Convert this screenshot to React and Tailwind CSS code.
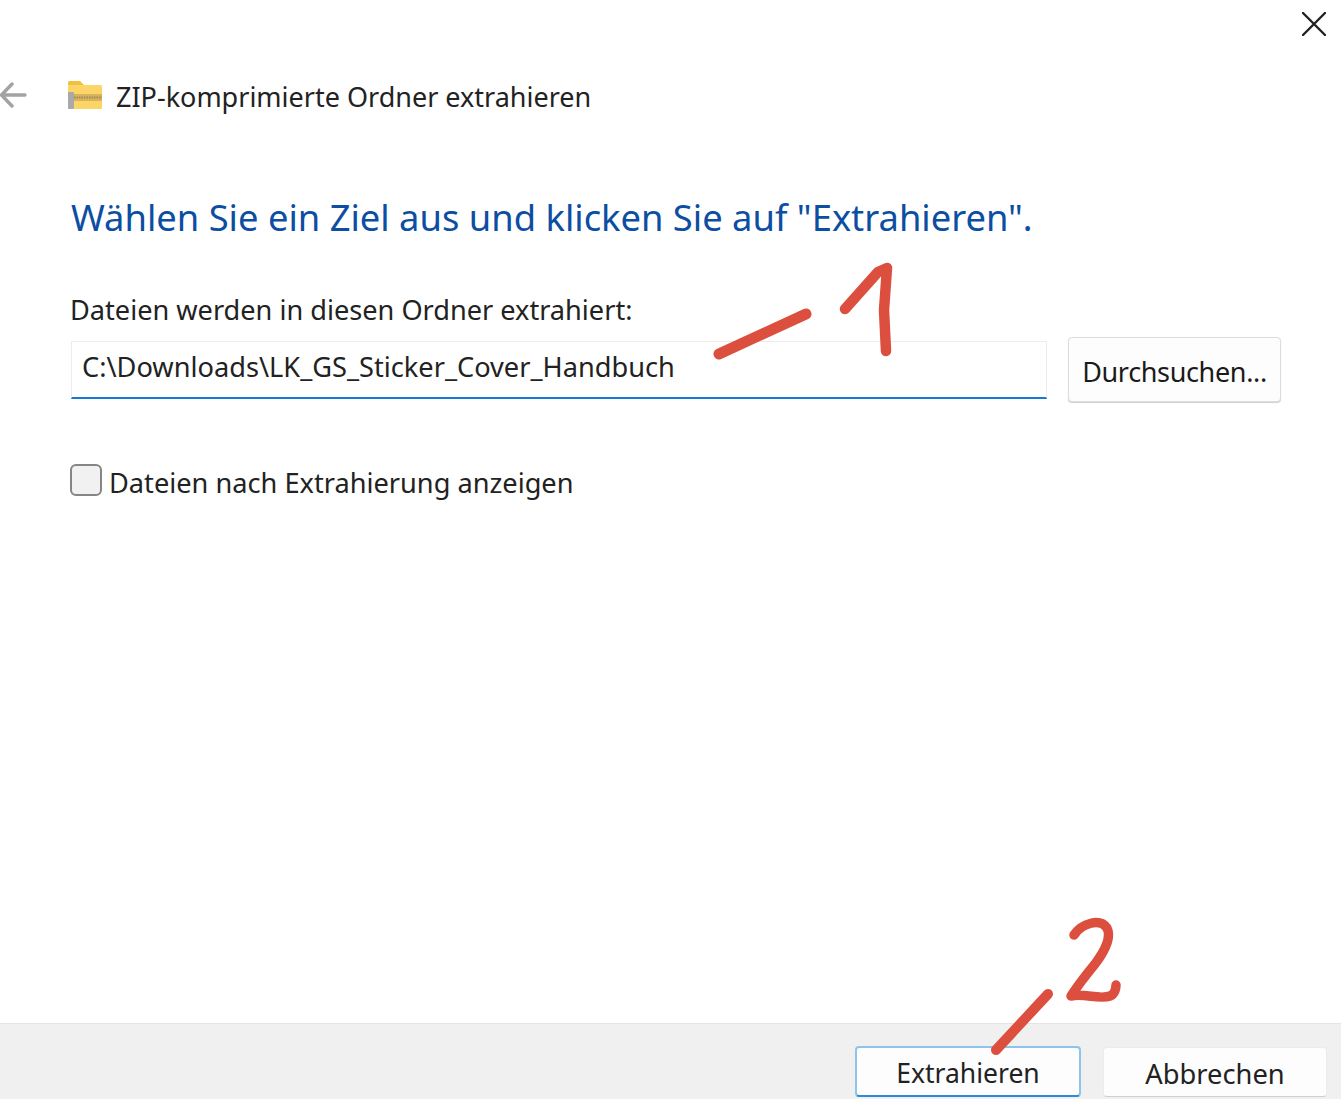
import React from 'react';

const font = 'font-["Noto_Sans",sans-serif]';

const Annotations = () => (
  <svg className="absolute left-0 top-0 pointer-events-none" width="1341" height="1099" viewBox="0 0 1341 1099" fill="none" stroke="#dc4f3e" strokeLinecap="round" strokeLinejoin="round">
    <path d="M719 354L806 314" strokeWidth="11" />
    <path d="M845 309L878 272L887 268L884 310L886 351" strokeWidth="10.5" />
    <path d="M996 1050L1048 994" strokeWidth="10" />
    <path d="M1074 935C1082 923 1100 918 1107 928C1112 938 1104 952 1095 964C1086 975 1078 985 1071 996C1084 993 1100 1000 1110 996C1115 994 1116 988 1116 985" strokeWidth="9.5" />
  </svg>
);

const FolderIcon = () => (
  <svg width="36" height="30" viewBox="0 0 36 30" className="shrink-0">
    <path d="M1 3C1 1.5 2 1 3 1H13L17 5H1Z" fill="#f5bf3c" />
    <rect x="1" y="5" width="34" height="24" rx="1.5" fill="#fbd568" />
    <rect x="1" y="14" width="34" height="7" fill="#d8b35a" />
    <path d="M7 17.5H35" stroke="#9c8a5e" strokeWidth="2" strokeDasharray="1.5 1" />
    <rect x="1" y="12" width="6" height="17" rx="1" fill="#a9a9a9" />
  </svg>
);

export default function App() {
  return (
    <div className={`relative flex h-[1099px] w-[1341px] flex-col overflow-hidden bg-white text-[#1a1a1a] ${font}`}>
      <div className="flex h-[80px] justify-end pr-[15px] pt-[12px]">
        <svg width="24" height="24" viewBox="0 0 24 24" stroke="#222" strokeWidth="2.4" strokeLinecap="round">
          <path d="M1 1L23 23M23 1L1 23" />
        </svg>
      </div>

      <div className="flex h-[30px] items-center">
        <svg width="28" height="28" viewBox="0 0 28 28" fill="none" stroke="#a3a3a3" strokeWidth="3.4" strokeLinecap="round" strokeLinejoin="round" className="-translate-y-[1px]">
          <path d="M25 15H2M12 4L1.5 15L12 26" />
        </svg>
        <div className="ml-[39px]"><FolderIcon /></div>
        <span className="ml-[13px] pt-[4px] text-[27px] leading-[30px] text-[#222]">ZIP-komprimierte Ordner extrahieren</span>
      </div>

      <div className="flex flex-1 flex-col pl-[71px] pr-[60px]">
        <h1 className="mt-[82px] whitespace-nowrap text-[36.35px] leading-[50px] font-normal text-[#0b4ea2]">
          Wählen Sie ein Ziel aus und klicken Sie auf "Extrahieren".
        </h1>
        <div className="-ml-px mt-[50px] text-[27.15px] leading-[36px] text-[#222]">Dateien werden in diesen Ordner extrahiert:</div>
        <div className="mt-[9px] flex items-start gap-[21px]">
          <div className="mt-[4px] flex h-[58px] w-[976px] items-center border border-b-2 border-[#ececec] border-b-[#1a78d2] pl-[10px] pb-[4px] text-[27.2px] text-[#222]">
            C:\Downloads\LK_GS_Sticker_Cover_Handbuch
          </div>
          <button className="flex h-[65px] w-[213px] items-center justify-center rounded-[4px] border border-[#dcdcdc] bg-[#fdfdfd] pt-[6px] text-[27px] tracking-[-0.35px] text-[#1a1a1a] shadow-[0_1px_1px_#cfcfcf]">
            Durchsuchen...
          </button>
        </div>
        <label className="mt-[63px] flex items-start gap-[7px]">
          <span className="-mt-[1px] -ml-px h-[32px] w-[32px] rounded-[6px] border-2 border-[#858585] bg-[#f1f1f1]" />
          <span className="text-[27.2px] leading-[36px] text-[#222]">Dateien nach Extrahierung anzeigen</span>
        </label>
      </div>

      <div className="flex h-[76px] items-end justify-end gap-[22px] border-t border-[#e4e4e4] bg-[#f0f0f0] pb-[2px] pr-[14px]">
        <button className="flex h-[51px] w-[226px] items-center justify-center rounded-[4px] border-2 border-[#8cc4ec] border-b-[#2f8ad6] bg-[#fdfdfd] pt-[4px] text-[26.5px] text-[#222]">
          Extrahieren
        </button>
        <button className="flex h-[50px] w-[224px] items-center justify-center rounded-[4px] border border-[#ececec] border-b-[#cfcfcf] bg-[#fdfdfd] pt-[4px] text-[27.3px] text-[#222]">
          Abbrechen
        </button>
      </div>

      <Annotations />
    </div>
  );
}
